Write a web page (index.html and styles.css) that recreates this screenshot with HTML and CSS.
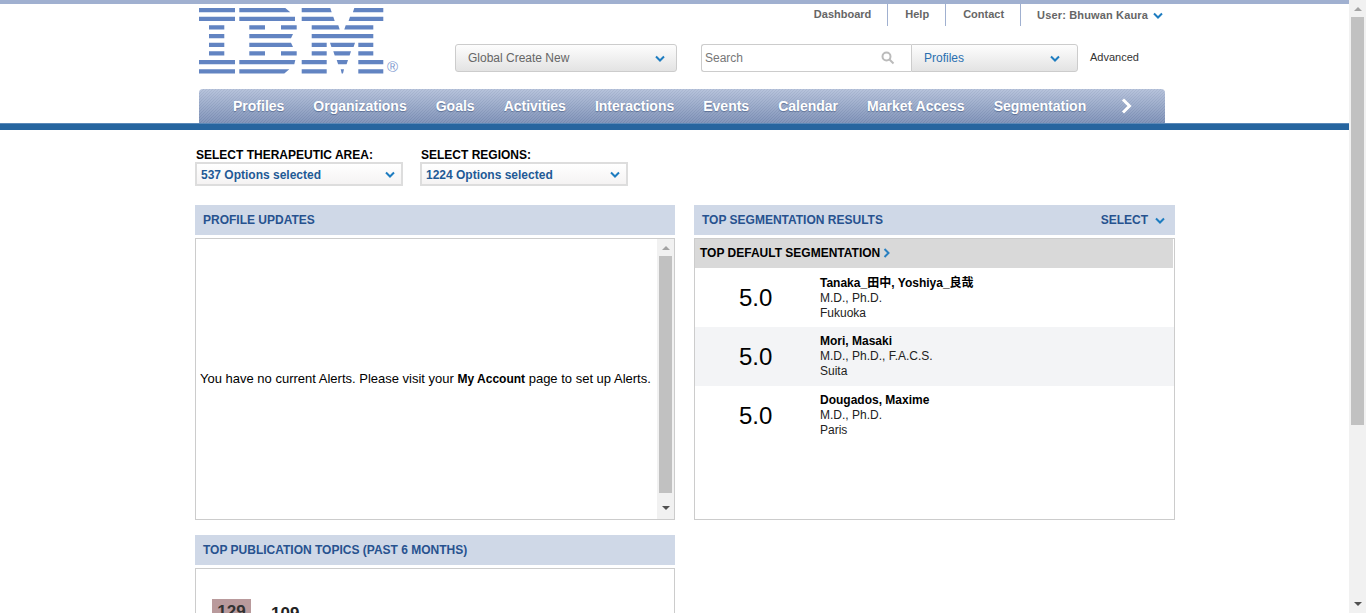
FILE: index.html
```html
<!DOCTYPE html>
<html lang="en">
<head>
    <meta charset="UTF-8">
    <meta name="viewport" content="width=device-width, initial-scale=1.0">
    <title>Dashboard</title>
    <link rel="stylesheet" href="styles.css">
</head>
<body>

<div class="page">
    <div class="top-bar"></div>

    <header class="header">
        <div class="logo">
            <svg width="186" height="66" viewBox="0 0 186 66" class="logo-mark" aria-label="IBM">
                <path d="M0 0h36v4.200H0zM40.300 0h46l5 4.200H40.300zM102.700 0h28.600l1.400 4.200h-30zM155.300 0h29v4.200h-30.400z
                         M0 8.700h36v4.200H0zM40.300 8.700h55.700v4.200H40.300zM102.700 8.700h31.600l1.400 4.200h-33zM151 8.700h33.300v4.200h-34.700z
                         M10 17.300h15.300v4.200H10zM50.300 17.300h15.700v4.200H50.300zM82 17.300h15.700v4.200H82zM112.700 17.300h26.600l1.400 4.200h-28zM146.700 17.300h27.600v4.200h-29z
                         M10 26h15.300v4.200H10zM50.300 26h43.700l-2 4.200H50.300zM112.700 26h61.600v4.200h-61.600z
                         M10 34.700h15.300v4.200H10zM50.300 34.700h41.700l2 4.200H50.300zM112.700 34.700h15v4.200h-15zM131 34.700h25l-1.400 4.200h-22.200zM159.300 34.700h15v4.200h-15z
                         M10 43.300h15.300v4.200H10zM50.300 43.300h15.700v4.200H50.300zM82 43.300h15.700v4.200H82zM112.700 43.300h15v4.200h-15zM134.300 43.300h17.700l-1.400 4.200h-14.900zM159.300 43.300h15v4.200h-15z
                         M0 52h36v4.300H0zM40.300 52h56l-1 4.300h-55zM102.700 52h25v4.300h-25zM137.700 52h11.300l-1.400 4.300h-8.500zM159.300 52h25v4.300h-25z
                         M0 61.300h36v4.200H0zM40.300 61.300h50l-5 4.200h-45zM102.700 61.300h25v4.200h-25zM141.700 61.300h3.300l-1 4.200h-1.300zM159.300 61.300h25v4.200h-25z"/>
            </svg>
            <span class="logo-reg">®</span>
        </div>

        <div class="header-right">
            <ul class="top-links">
                <li>Dashboard</li>
                <li>Help</li>
                <li>Contact</li>
                <li class="user-link">User: Bhuwan Kaura
                    <svg class="chev" width="10" height="7" viewBox="0 0 10 7"><path d="M1 1.500l4 4 4-4"/></svg>
                </li>
            </ul>
            <div class="search-row">
                <div class="select-btn create-select">
                    <span>Global Create New</span>
                    <svg class="chev" width="10" height="7" viewBox="0 0 10 7"><path d="M1 1.500l4 4 4-4"/></svg>
                </div>
                <div class="search-box">
                    <div class="search-input">
                        <span>Search</span>
                        <svg width="14" height="14" viewBox="0 0 14 14" class="search-icon"><circle cx="5.500" cy="5.500" r="4"/><path d="M8.500 8.500l4 4"/></svg>
                    </div>
                    <div class="select-btn search-select">
                        <span>Profiles</span>
                        <svg class="chev" width="10" height="7" viewBox="0 0 10 7"><path d="M1 1.500l4 4 4-4"/></svg>
                    </div>
                </div>
                <span class="advanced">Advanced</span>
            </div>
        </div>
    </header>

    <nav class="nav">
        <a>Profiles</a>
        <a>Organizations</a>
        <a>Goals</a>
        <a>Activities</a>
        <a>Interactions</a>
        <a>Events</a>
        <a>Calendar</a>
        <a>Market Access</a>
        <a>Segmentation</a>
        <svg class="nav-next" width="13" height="16" viewBox="0 0 13 16"><path d="M3 1.500L9.500 8 3 14.500"/></svg>
    </nav>
    <div class="nav-line"></div>

    <main class="content">
        <div class="filters">
            <div class="filter">
                <label>SELECT THERAPEUTIC AREA:</label>
                <div class="filter-select">
                    <span>537 Options selected</span>
                    <svg class="chev" width="10" height="7" viewBox="0 0 10 7"><path d="M1 1.500l4 4 4-4"/></svg>
                </div>
            </div>
            <div class="filter">
                <label>SELECT REGIONS:</label>
                <div class="filter-select">
                    <span>1224 Options selected</span>
                    <svg class="chev" width="10" height="7" viewBox="0 0 10 7"><path d="M1 1.500l4 4 4-4"/></svg>
                </div>
            </div>
        </div>

        <div class="panels">
            <div class="column">
                <section class="panel">
                    <h3 class="panel-title">PROFILE UPDATES</h3>
                    <div class="panel-body alerts">
                        <p>You have no current Alerts. Please visit your <b>My Account</b> page to set up Alerts.</p>
                        <div class="inner-scroll">
                            <span class="arrow-up"></span>
                            <span class="inner-thumb"></span>
                            <span class="arrow-down"></span>
                        </div>
                    </div>
                </section>
                <section class="panel">
                    <h3 class="panel-title">TOP PUBLICATION TOPICS (PAST 6 MONTHS)</h3>
                    <div class="panel-body topics">
                        <span class="topic-count">129</span>
                        <span class="topic-num">109</span>
                    </div>
                </section>
            </div>

            <div class="column">
                <section class="panel">
                    <h3 class="panel-title">
                        TOP SEGMENTATION RESULTS
                        <span class="panel-select">SELECT
                            <svg class="chev" width="10" height="7" viewBox="0 0 10 7"><path d="M1 1.500l4 4 4-4"/></svg>
                        </span>
                    </h3>
                    <div class="panel-body results">
                        <div class="results-head">TOP DEFAULT SEGMENTATION
                            <svg class="head-chev" width="7" height="10" viewBox="0 0 7 10"><path d="M1.500 1l4 4-4 4"/></svg>
                        </div>
                        <div class="result">
                            <div class="score">5.0</div>
                            <div class="person">
                                <b class="name-cjk">Tanaka_田中, Yoshiya_良哉</b>
                                <span>M.D., Ph.D.</span>
                                <span>Fukuoka</span>
                            </div>
                        </div>
                        <div class="result alt">
                            <div class="score">5.0</div>
                            <div class="person">
                                <b>Mori, Masaki</b>
                                <span>M.D., Ph.D., F.A.C.S.</span>
                                <span>Suita</span>
                            </div>
                        </div>
                        <div class="result">
                            <div class="score">5.0</div>
                            <div class="person">
                                <b>Dougados, Maxime</b>
                                <span>M.D., Ph.D.</span>
                                <span>Paris</span>
                            </div>
                        </div>
                    </div>
                </section>
            </div>
        </div>
    </main>
</div>

<div class="scrollbar">
    <span class="arrow-up"></span>
    <span class="scroll-thumb"></span>
    <span class="arrow-down"></span>
</div>

</body>
</html>
```

FILE: styles.css
```css
html, body {
    height: 100%;
    overflow: hidden;
}
body {
    margin: 0;
    display: flex;
    font-family: "Liberation Sans", Arial, "Noto Sans CJK JP", sans-serif;
    font-size: 12px;
    color: #000;
    background: #fff;
}
.page {
    flex: 1;
    min-width: 0;
    height: 613px;
    overflow: hidden;
}
.top-bar {
    height: 4px;
    background: #a0b0d0;
}
.chev {
    flex: none;
    fill: none;
    stroke: #1d7cc0;
    stroke-width: 2;
}

/* header */
.header {
    display: flex;
    height: 85px;
    padding-left: 199px;
}
.logo {
    display: flex;
    align-items: flex-end;
    width: 256px;
    height: 70px;
}
.logo-mark {
    fill: #6284c2;
}
.logo-reg {
    margin-left: 2px;
    font-size: 15px;
    line-height: 15px;
    color: #7f9ad0;
}
.header-right {
    width: 710px;
}
.top-links {
    display: flex;
    justify-content: flex-end;
    height: 22px;
    margin: 0;
    padding: 0;
    list-style: none;
}
.top-links li {
    padding: 0 16px 0 17px;
    border-left: 1px solid #a0b0d0;
    font-size: 11px;
    font-weight: bold;
    line-height: 21px;
    color: #666;
}
.top-links li:first-child {
    border-left: none;
}
.top-links .user-link {
    display: flex;
    align-items: center;
    gap: 5px;
    padding: 0 2px 0 16px;
    letter-spacing: 0.15px;
}
.search-row {
    display: flex;
    align-items: center;
    margin-top: 18px;
}
.select-btn {
    display: flex;
    align-items: center;
    justify-content: space-between;
    box-sizing: border-box;
    height: 28px;
    padding: 0 11px 0 12px;
    background: linear-gradient(#fdfdfd, #e3e3e3);
    border: 1px solid #ccc;
    color: #666;
    border-radius: 3px;
}
.create-select {
    width: 222px;
    margin-right: 24px;
}
.search-box {
    display: flex;
    width: 377px;
    margin-right: 12px;
}
.search-input {
    display: flex;
    align-items: center;
    justify-content: space-between;
    box-sizing: border-box;
    width: 210px;
    height: 28px;
    padding: 0 16px 0 3px;
    border: 1px solid #ccc;
    border-right: none;
    border-radius: 3px 0 0 3px;
    color: #777;
}
.search-icon {
    fill: none;
    stroke: #bbb;
    stroke-width: 2;
}
.search-select {
    width: 167px;
    border-radius: 0 3px 3px 0;
    color: #2a6fb0;
}
.search-select .chev {
    margin-right: 6px;
}
.advanced {
    margin-bottom: 2px;
    font-size: 11px;
    color: #333;
}

/* nav */
.nav {
    display: flex;
    align-items: center;
    gap: 29px;
    box-sizing: border-box;
    width: 966px;
    height: 34px;
    margin-left: 199px;
    padding-left: 34px;
    border-radius: 4px 4px 0 0;
    background:
        repeating-linear-gradient(135deg, rgba(255, 255, 255, 0.07) 0, rgba(255, 255, 255, 0.07) 1.06px, rgba(0, 0, 0, 0.03) 1.06px, rgba(0, 0, 0, 0.03) 2.121px),
        linear-gradient(#b2bfd9, #7a8eb5);
}
.nav a {
    font-size: 14px;
    font-weight: bold;
    color: #fff;
    text-shadow: 0 1px 1px rgba(60, 80, 120, 0.6);
}
.nav-next {
    margin-left: 5px;
    fill: none;
    stroke: #fff;
    stroke-width: 3;
}
.nav-line {
    height: 6px;
    background: #26659f;
    border-top: 1px solid #5b89b8;
}

/* content */
.content {
    width: 980px;
    margin-left: 195px;
    padding-top: 17px;
}
.filters {
    display: flex;
    gap: 17px;
}
.filter {
    width: 208px;
}
.filter label {
    display: block;
    margin-left: 1px;
    padding-top: 1px;
    font-size: 12px;
    font-weight: bold;
    line-height: 14px;
}
.filter-select {
    display: flex;
    align-items: center;
    justify-content: space-between;
    box-sizing: border-box;
    height: 24px;
    padding: 1px 6px 0 4px;
    background: linear-gradient(#fff, #f5f3f3);
    border: 2px solid #ddd;
    font-weight: bold;
    color: #1f5a96;
}
.panels {
    display: flex;
    gap: 19px;
    margin-top: 19px;
}
.column {
    width: 480px;
}
.column + .column {
    width: 481px;
}
.panel {
    margin-bottom: 15px;
}
.panel-title {
    display: flex;
    align-items: center;
    justify-content: space-between;
    height: 30px;
    margin: 0 0 3px;
    padding: 0 10px 0 8px;
    background: #cfd8e7;
    font-size: 12px;
    font-weight: bold;
    color: #27528f;
}
.panel-select {
    display: flex;
    align-items: center;
    gap: 7px;
}
.panel-body {
    box-sizing: border-box;
    border: 1px solid #ccc;
}
.alerts {
    display: flex;
    align-items: center;
    height: 282px;
}
.alerts p {
    flex: 1;
    margin: 0;
    padding: 0 0 2px 4px;
    font-size: 13px;
    white-space: nowrap;
}
.alerts p b {
    font-size: 12px;
}
.inner-scroll {
    display: flex;
    flex-direction: column;
    align-items: center;
    align-self: stretch;
    width: 17px;
    padding-top: 7px;
    box-sizing: border-box;
    background: #f1f1f1;
}
.arrow-up {
    width: 0;
    height: 0;
    border: 4px solid transparent;
    border-top: none;
    border-bottom: 4px solid #a3a3a3;
}
.inner-thumb {
    width: 13px;
    height: 237px;
    margin-top: 6px;
    background: #c1c1c1;
}
.arrow-down {
    width: 0;
    height: 0;
    margin-top: 13px;
    border: 4px solid transparent;
    border-bottom: none;
    border-top: 4px solid #505050;
}
.topics {
    display: flex;
    align-items: flex-start;
    gap: 20px;
    height: 200px;
    padding: 30px 0 0 16px;
}
.topic-count {
    width: 39px;
    height: 30px;
    background: #b99a9c;
    font-size: 17px;
    font-weight: bold;
    line-height: 26px;
    text-align: center;
    color: #333;
}
.topic-num {
    font-size: 17px;
    font-weight: bold;
    line-height: 29px;
    color: #222;
}
.results {
    height: 282px;
}
.results-head {
    display: flex;
    align-items: center;
    gap: 3px;
    box-sizing: border-box;
    height: 29px;
    margin-right: 1px;
    padding: 0 0 2px 5px;
    background: #d9d9d9;
    font-weight: bold;
}
.head-chev {
    fill: none;
    stroke: #2a80c0;
    stroke-width: 2;
}
.result {
    display: flex;
    height: 59px;
    box-sizing: border-box;
    padding-top: 7px;
}
.result.alt {
    background: #f3f4f6;
}
.score {
    width: 125px;
    padding: 9px 0 0 44px;
    box-sizing: border-box;
    font-size: 24px;
    line-height: 28px;
}
.person {
    display: flex;
    flex-direction: column;
    line-height: 15px;
    color: #222;
}
.person b {
    color: #000;
}
.person .name-cjk {
    line-height: 16px;
}

/* page scrollbar */
.scrollbar {
    display: flex;
    flex-direction: column;
    align-items: center;
    flex: none;
    box-sizing: border-box;
    width: 17px;
    height: 613px;
    padding: 7px 0;
    background: #f1f1f1;
}
.scroll-thumb {
    width: 13px;
    height: 408px;
    margin-top: 6px;
    background: #c1c1c1;
}
.scrollbar .arrow-down {
    margin-top: auto;
}
```
